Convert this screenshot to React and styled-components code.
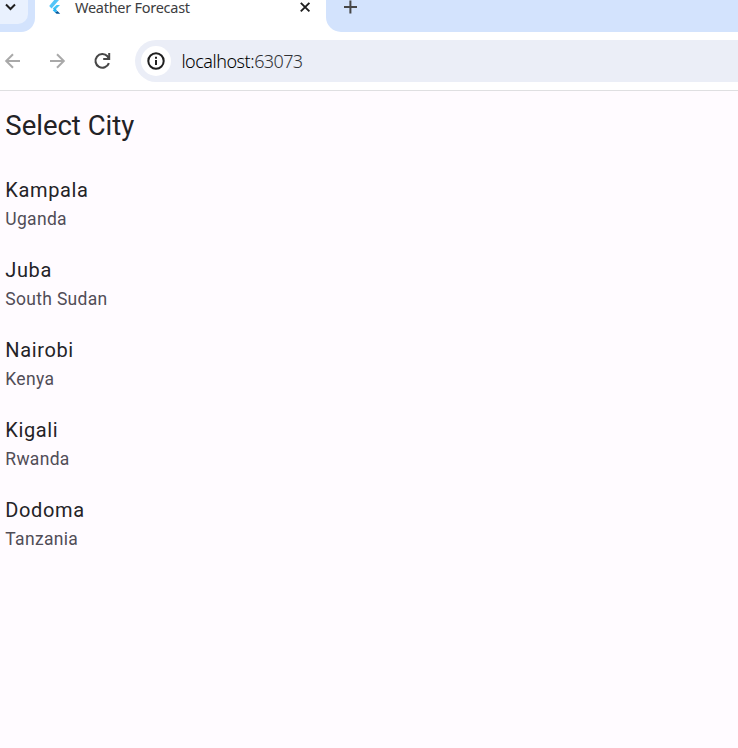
import React from "react";
import styled, { createGlobalStyle } from "styled-components";

const GlobalStyle = createGlobalStyle`
  * { box-sizing: border-box; }
  body { margin: 0; background: #fffbff; }
`;

const Window = styled.div`
  display: flex;
  flex-direction: column;
  width: 100%;
  height: 100vh;
  overflow: hidden;
  background: #fffbff;
  font-family: Roboto, sans-serif;
`;

const TabStrip = styled.div`
  display: flex;
  height: 32px;
  flex: none;
  background: #fff;
`;

const StripStart = styled.div`
  width: 35px;
  height: 32px;
  background: #d3e3fd;
  border-bottom-right-radius: 14px;
`;

const TabSearch = styled.div`
  width: 28px;
  height: 24px;
  background: #e9f1fe;
  border-bottom-right-radius: 10px;
  svg { display: block; }
`;

const Tab = styled.div`
  display: flex;
  width: 291px;
  height: 32px;
  padding-left: 13px;
  svg { display: block; flex: none; }
`;

const TabTitle = styled.span`
  width: 224px;
  margin-left: 12px;
  font: 400 14.5px/15px "Noto Sans", sans-serif;
  letter-spacing: -0.27px;
  color: #3c3d40;
  white-space: nowrap;
`;

const StripEnd = styled.div`
  flex: 1;
  height: 32px;
  padding-left: 16px;
  background: #d3e3fd;
  border-bottom-left-radius: 15px;
  svg { display: block; }
`;

const Toolbar = styled.div`
  display: flex;
  align-items: center;
  height: 59px;
  flex: none;
  background: #fff;
  border-bottom: 1px solid #dfdfe1;
  svg { display: block; flex: none; }
`;

const NavButtons = styled.div`
  display: flex;
  align-items: center;
  gap: 21px;
  width: 135px;
`;

const AddressBar = styled.div`
  display: flex;
  align-items: center;
  flex: 1;
  height: 42px;
  padding-left: 6px;
  border-radius: 21px 0 0 21px;
  background: #ebeef7;
`;

const SiteInfo = styled.div`
  display: grid;
  place-items: center;
  width: 30px;
  height: 30px;
  border-radius: 50%;
  background: #fff;
`;

const Url = styled.span`
  margin-left: 10.4px;
  font: 300 18px/24px "Noto Sans", sans-serif;
  letter-spacing: -0.6px;
  color: #303236;
  b { font-weight: inherit; color: #000; letter-spacing: -0.48px; }
`;

const Page = styled.main`
  flex: 1;
  padding: 17px 5.3px 0;
`;

const Heading = styled.h1`
  margin: 0 0 32px;
  font-size: 27.5px;
  font-weight: 400;
  line-height: 35px;
  color: #232226;
`;

const CityItem = styled.div`
  height: 80px;
`;

const CityName = styled.div`
  font-size: 20px;
  font-weight: 400;
  line-height: 30px;
  letter-spacing: 0.625px;
  color: #242327;
`;

const Country = styled.div`
  margin-top: 2px;
  font-size: 17.5px;
  font-weight: 400;
  line-height: 25px;
  letter-spacing: 0.3125px;
  color: #514d57;
`;

const CITIES = [
  ["Kampala", "Uganda"],
  ["Juba", "South Sudan"],
  ["Nairobi", "Kenya"],
  ["Kigali", "Rwanda"],
  ["Dodoma", "Tanzania"],
];

const ChevronIcon = () => (
  <svg width="28" height="24" fill="none" stroke="#1f1f1f" strokeWidth="2">
    <path d="M6 4.5l4.5 4.5L15 4.5" />
  </svg>
);

const FlutterIcon = () => (
  <svg width="15" height="16">
    <path d="M6.2 0H11L3.6 8.4 1.2 6z" fill="#54c5f8" />
    <path d="M8.6 5H12L6.8 10.3 4.7 8.6z" fill="#45c4f4" />
    <path d="M4.7 10.3l2.3-2 2.2 2.2-2.2 2z" fill="#29b6f6" />
    <path d="M7 12.4l2.4-1.5 2.8 2.8H8.6z" fill="#01579b" />
  </svg>
);

const CloseIcon = () => (
  <svg width="14" height="16" stroke="#1f1f1f" strokeWidth="1.9">
    <path d="M1.8 2.8l8.6 8.6M10.4 2.8l-8.6 8.6" />
  </svg>
);

const PlusIcon = () => (
  <svg width="16" height="16" stroke="#474747" strokeWidth="2">
    <path d="M2 7h13M8.4 .5v13" />
  </svg>
);

const BackIcon = () => (
  <svg width="24" height="20" fill="none" stroke="#a9a9a9" strokeWidth="2">
    <path d="M20 10H6.5M13 3.2L6.2 10l6.8 6.8" />
  </svg>
);

const ForwardIcon = () => (
  <svg width="24" height="20" fill="none" stroke="#a9a9a9" strokeWidth="2">
    <path d="M5 10h13.5M12 3.2l6.8 6.8-6.8 6.8" />
  </svg>
);

const ReloadIcon = () => (
  <svg width="24" height="20" fill="none" stroke="#474747" strokeWidth="2.1">
    <path d="M18.9 12.2A6.9 6.9 0 1 1 17.5 5.2l1.7 1.7" />
    <path d="M18.2 2h2v7h-7V7h3.5l1.5-1.5z" fill="#474747" stroke="none" />
  </svg>
);

const InfoIcon = () => (
  <svg width="18" height="18" fill="none" stroke="#1f1f1f" strokeWidth="2">
    <circle cx="9" cy="9" r="7.7" />
    <path d="M9 8v5M9 4.8v2" />
  </svg>
);

export default function App() {
  return (
    <Window>
      <GlobalStyle />
      <TabStrip>
        <StripStart>
          <TabSearch><ChevronIcon /></TabSearch>
        </StripStart>
        <Tab>
          <FlutterIcon />
          <TabTitle>Weather Forecast</TabTitle>
          <CloseIcon />
        </Tab>
        <StripEnd><PlusIcon /></StripEnd>
      </TabStrip>
      <Toolbar>
        <NavButtons>
          <BackIcon />
          <ForwardIcon />
          <ReloadIcon />
        </NavButtons>
        <AddressBar>
          <SiteInfo><InfoIcon /></SiteInfo>
          <Url><b>localhost:</b>63073</Url>
        </AddressBar>
      </Toolbar>
      <Page>
        <Heading>Select City</Heading>
        {CITIES.map(([city, country]) => (
          <CityItem key={city}>
            <CityName>{city}</CityName>
            <Country>{country}</Country>
          </CityItem>
        ))}
      </Page>
    </Window>
  );
}
